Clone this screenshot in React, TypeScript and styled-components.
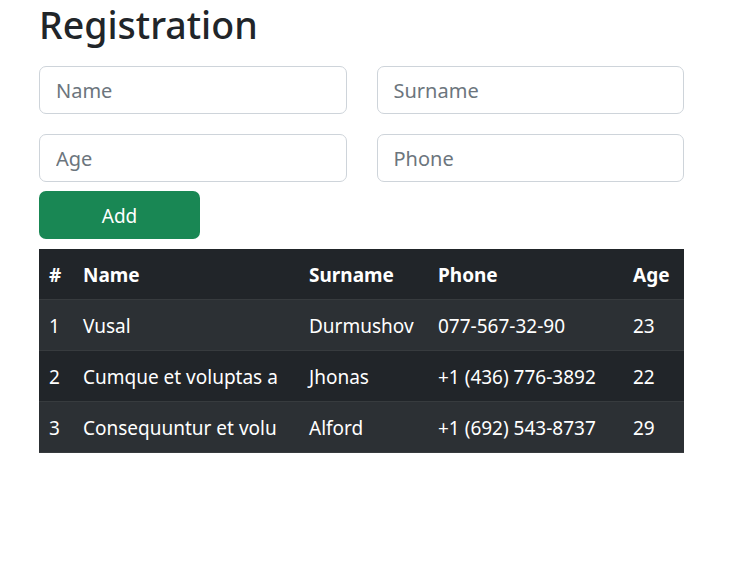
import styled, { createGlobalStyle } from "styled-components";

const GlobalStyle = createGlobalStyle`
    body {
        margin: 0;
        background: #fff;
        color: #212529;
        font-family: "Noto Sans", "Open Sans", sans-serif;
    }
    * { box-sizing: border-box; }
`;

const rows = [
    { id: 1, name: "Vusal", surname: "Durmushov", phone: "077-567-32-90", age: 23 },
    { id: 2, name: "Cumque et voluptas a", surname: "Jhonas", phone: "+1 (436) 776-3892", age: 22 },
    { id: 3, name: "Consequuntur et volu", surname: "Alford", phone: "+1 (692) 543-8737", age: 29 },
];

export default function App() {
    return (
        <>
            <GlobalStyle />
            <Container>
                <Heading>Registration</Heading>
                <Form>
                    <Input placeholder="Name" />
                    <Input placeholder="Surname" />
                    <Input placeholder="Age" />
                    <Input placeholder="Phone" />
                </Form>
                <AddButton>Add</AddButton>
                <Table>
                    <thead>
                        <tr>
                            <Th $w={34}>#</Th>
                            <Th $w={226}>Name</Th>
                            <Th $w={129}>Surname</Th>
                            <Th $w={195}>Phone</Th>
                            <Th>Age</Th>
                        </tr>
                    </thead>
                    <tbody>
                        {rows.map((r, i) => (
                            <Row key={r.id} $striped={i % 2 === 0}>
                                <Td>{r.id}</Td>
                                <Td>{r.name}</Td>
                                <Td>{r.surname}</Td>
                                <Td>{r.phone}</Td>
                                <Td>{r.age}</Td>
                            </Row>
                        ))}
                    </tbody>
                </Table>
            </Container>
        </>
    );
}

const Container = styled.div`
    width: 645px;
    margin-left: 39px;
    padding-top: 2px;
`;

const Heading = styled.h1`
    margin: 0 0 19px;
    font-size: 37.5px;
    font-weight: 500;
    line-height: 1.2;
    color: #212529;
`;

const Form = styled.div`
    display: grid;
    grid-template-columns: 1fr 1fr;
    column-gap: 30px;
    row-gap: 20px;
`;

const Input = styled.input`
    height: 48px;
    width: 100%;
    padding: 8px 16px;
    font-family: inherit;
    font-size: 20px;
    color: #212529;
    border: 1px solid #ced4da;
    border-radius: 7px;
    outline: none;
    &::placeholder {
        color: #6c757d;
    }
`;

const AddButton = styled.button`
    display: block;
    margin-top: 9px;
    width: 161px;
    height: 48px;
    padding: 2px 0 0;
    border: none;
    border-radius: 7px;
    background: #198754;
    color: #fff;
    font-family: inherit;
    font-size: 19px;
    cursor: pointer;
`;

const Table = styled.table`
    margin-top: 10px;
    width: 100%;
    border-collapse: collapse;
    background: #212529;
    color: #fff;
    font-size: 19px;
`;

const Th = styled.th<{ $w?: number }>`
    width: ${(p) => (p.$w ? `${p.$w}px` : "auto")};
    height: 50px;
    padding: 2px 10px 0;
    text-align: left;
    font-weight: 700;
    border-bottom: 1px solid #373b3e;
`;

const Row = styled.tr<{ $striped: boolean }>`
    background: ${(p) => (p.$striped ? "#2c3034" : "#212529")};
`;

const Td = styled.td`
    height: 51px;
    padding: 2px 10px 0;
    border-bottom: 1px solid #373b3e;
    white-space: nowrap;
`;
